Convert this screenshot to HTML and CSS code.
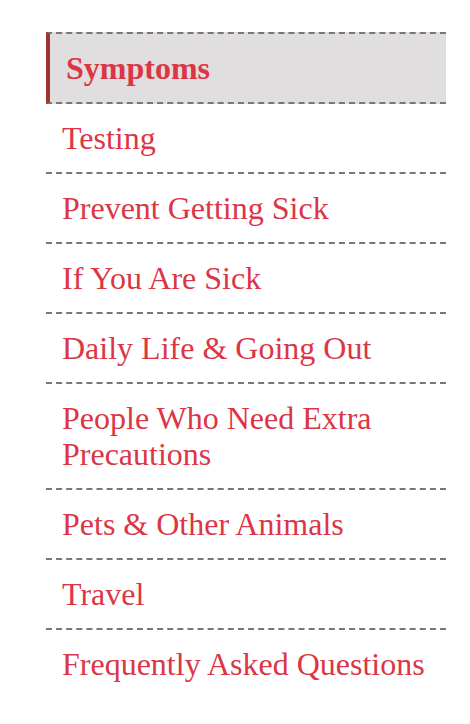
FILE: index.html
```html
<!DOCTYPE html>
<html lang="en">
<head>
<meta charset="utf-8">
<title>Menu</title>
<link rel="stylesheet" href="styles.css">
</head>
<body>
<nav class="side-nav">
  <ul class="nav-list">
    <li class="nav-item active"><a href="#">Symptoms</a></li>
    <li class="nav-item"><a href="#">Testing</a></li>
    <li class="nav-item"><a href="#">Prevent Getting Sick</a></li>
    <li class="nav-item"><a href="#">If You Are Sick</a></li>
    <li class="nav-item"><a href="#">Daily Life &amp; Going Out</a></li>
    <li class="nav-item"><a href="#">People Who Need Extra Precautions</a></li>
    <li class="nav-item"><a href="#">Pets &amp; Other Animals</a></li>
    <li class="nav-item"><a href="#">Travel</a></li>
    <li class="nav-item"><a href="#">Frequently Asked Questions</a></li>
  </ul>
</nav>
</body>
</html>
```
FILE: styles.css
```css
html, body {
  margin: 0;
  padding: 0;
  background: #ffffff;
}

body {
  font-family: "Liberation Serif", "Times New Roman", serif;
}

.side-nav {
  margin: 32px 0 0 46px;
  width: 400px;
}

.nav-list {
  list-style: none;
  margin: 0;
  padding: 0;
}

.nav-item {
  border-bottom: 2px dashed #777777;
}

.nav-item:last-child {
  border-bottom: none;
}

.nav-item a {
  display: block;
  padding: 16px 16px;
  font-size: 32px;
  line-height: 36px;
  color: #dc3545;
  text-decoration: none;
}

.nav-item.active {
  border-top: 2px dashed #777777;
  border-left: 4px solid #9e3434;
  background: #e0dede;
}

.nav-item.active a {
  font-weight: bold;
}
```
